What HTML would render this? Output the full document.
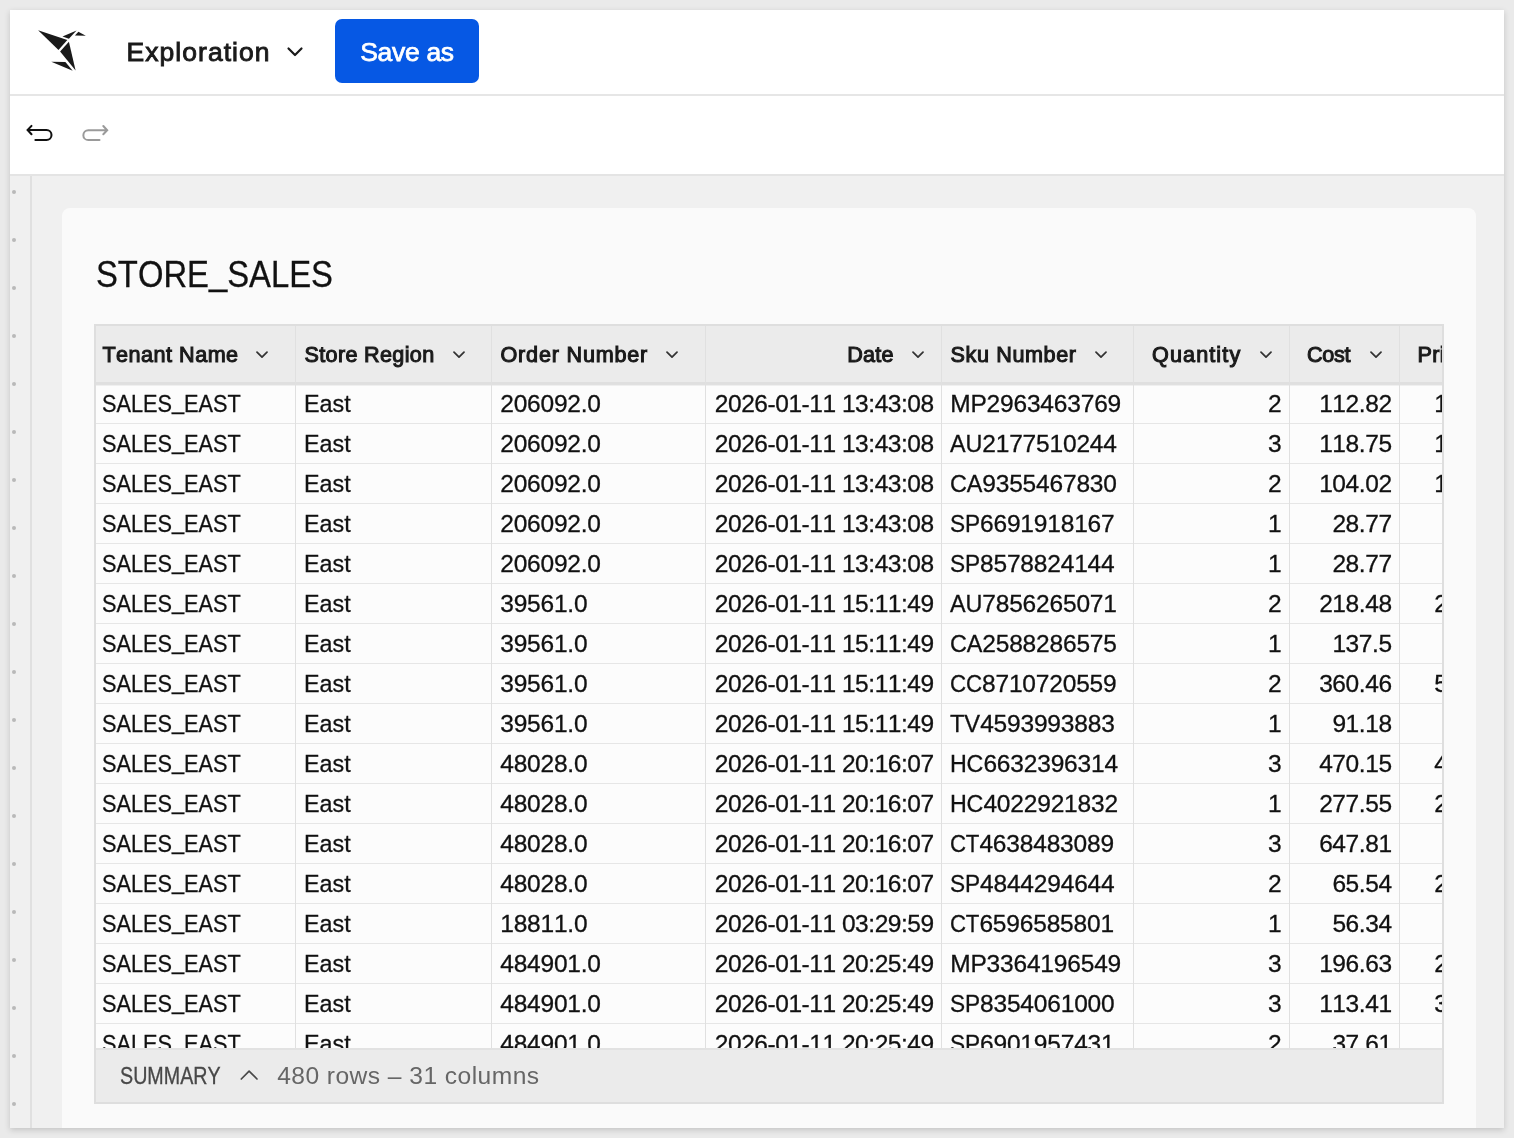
<!DOCTYPE html>
<html lang="en"><head><meta charset="utf-8"><title>Exploration</title>
<style>
html,body{margin:0;padding:0}
body{font-kerning:none;width:1514px;height:1138px;overflow:hidden;background:#eaeaea;font-family:"Liberation Sans",sans-serif;color:#111;position:relative}
.abs{position:absolute}
#panel{will-change:transform;position:absolute;left:10px;top:10px;width:1494px;height:1118px;background:#f0f0f0;box-shadow:0 2px 6px rgba(0,0,0,.17);overflow:hidden}
#hdr{position:absolute;left:0;top:0;width:1494px;height:84px;background:#fff;border-bottom:2px solid #e6e6e6}
#tb{position:absolute;left:0;top:86px;width:1494px;height:78px;background:#fff;border-bottom:2px solid #e4e4e4}
#title{position:absolute;left:116.5px;top:26px;font-weight:400;-webkit-text-stroke:.9px #1a1a1a;font-size:26.5px;line-height:32px;letter-spacing:1.05px;color:#1a1a1a;white-space:nowrap}
#save{position:absolute;left:325px;top:9px;width:144px;height:64px;border-radius:7px;background:#0658e4;color:#fff;font-weight:400;-webkit-text-stroke:.75px #fff;font-size:26.5px;line-height:66px;text-align:center;letter-spacing:-.3px;white-space:nowrap}
#ruler{position:absolute;left:0;top:166px;width:20px;height:952px;border-right:2px solid #e0e0e0}
.dot{position:absolute;left:2px;width:4px;height:4px;border-radius:50%;background:#b9b9b9}
#card{position:absolute;left:52px;top:198px;width:1414px;height:940px;background:#fafafa;border-radius:8px}
#h1{position:absolute;left:85.6px;top:245px;-webkit-text-stroke:.3px #111;font-size:36.2px;line-height:40px;white-space:nowrap;transform-origin:0 0;transform:scaleX(.906);color:#111}
#tbl{position:absolute;left:84px;top:314px;width:1346px;height:776px;border:2px solid #dedede;background:#fcfcfc;overflow:hidden}
#thead{position:absolute;left:0;top:0;width:1346px;height:56px;background:#ebebeb;border-bottom:2px solid #dfdfdf;box-shadow:0 1px 0 #e0e0e0,0 2px 0 #efefef;z-index:2}
.vs{position:absolute;top:0;width:1px;height:724px;background:#e0e0e0;z-index:3}
.hs{position:absolute;left:0;width:1346px;height:1px;background:#e6e6e6}
.c{position:absolute;font-size:23.2px;line-height:28px;white-space:nowrap;color:#111}
.c.r{text-align:right}
.c{font-size:24.5px;transform-origin:0 50%;-webkit-text-stroke:.3px #111}
.c.r{transform-origin:100% 50%}
.u{position:relative;top:-2.6px}
.p{display:inline-block;transform-origin:0 50%}
.c0{transform:scaleX(.886)}
.c1{transform:scaleX(.951)}
.c2{letter-spacing:-.22px}
.c3{letter-spacing:-.455px}
.c4{letter-spacing:-.18px}
.c5{letter-spacing:0}
.c6{letter-spacing:-.4px}
.c7{letter-spacing:-.4px}
.h{position:absolute;top:14.5px;font-weight:400;-webkit-text-stroke:1.05px #1a1a1a;font-size:21.6px;line-height:28px;white-space:nowrap;color:#1a1a1a;z-index:4}
.chev{position:absolute;top:25px;width:12px;height:8px;z-index:4}
#sum{position:absolute;left:0;top:722px;width:1346px;height:54px;background:#ebebeb;z-index:5;border-top:2px solid #e2e2e2;box-sizing:border-box}
#sum span{position:absolute;top:12px;line-height:28px;white-space:nowrap;color:#666}
</style></head><body>
<div id="panel">
<div id="hdr">
<svg class="abs" style="left:0;top:0" width="100" height="84" viewBox="10 10 100 84"><g fill="#1a1a1a">
<polygon points="38.1,30.3 67.3,40.1 58.5,50.1"/>
<polygon points="62.5,36.6 76.6,30.4 68.9,38.7"/>
<polygon points="74.9,35.5 78.4,31.8 85.8,35.7"/>
<polygon points="60.1,51.5 68.9,41.8 75.6,70.6"/>
<polygon points="51.3,61.7 65.4,62.0 72.7,70.8"/>
</g></svg>
<div id="title">Exploration</div>
<svg class="abs" style="left:276px;top:36px" width="18" height="12" viewBox="0 0 18 12"><path d="M2.5 2.5 L9 9 L15.5 2.5" fill="none" stroke="#1a1a1a" stroke-width="2.2" stroke-linecap="round" stroke-linejoin="round"/></svg>
<div id="save">Save as</div>
</div>
<div id="tb">
<svg class="abs" style="left:10px;top:14px" width="110" height="40" viewBox="20 110 110 40" fill="none" stroke-linecap="round" stroke-linejoin="miter">
<path d="M31.5 125.9 L27.6 130.05 L31.5 134.2 M27.8 130.05 H46.5 A5 5 0 0 1 46.5 140.05 H35.4" stroke="#111" stroke-width="2.05"/>
<path d="M103.3 126 L107.2 130.2 L103.3 134.3 M107 130.2 H88.3 A4.95 4.95 0 0 0 88.3 140.1 H99.5" stroke="#9a9a9a" stroke-width="2"/>
</svg>
</div>
<div id="ruler">
<div class="dot" style="top:14px"></div>
<div class="dot" style="top:62px"></div>
<div class="dot" style="top:110px"></div>
<div class="dot" style="top:158px"></div>
<div class="dot" style="top:206px"></div>
<div class="dot" style="top:254px"></div>
<div class="dot" style="top:302px"></div>
<div class="dot" style="top:350px"></div>
<div class="dot" style="top:398px"></div>
<div class="dot" style="top:446px"></div>
<div class="dot" style="top:494px"></div>
<div class="dot" style="top:542px"></div>
<div class="dot" style="top:590px"></div>
<div class="dot" style="top:638px"></div>
<div class="dot" style="top:686px"></div>
<div class="dot" style="top:734px"></div>
<div class="dot" style="top:782px"></div>
<div class="dot" style="top:830px"></div>
<div class="dot" style="top:878px"></div>
<div class="dot" style="top:926px"></div>
</div>
<div id="card"></div>
<div id="h1">STORE<span class="u" style="top:-2px">_</span>SALES</div>
<div id="tbl">
<div id="thead"></div>
<div class="vs" style="left:199px"></div>
<div class="vs" style="left:395px"></div>
<div class="vs" style="left:609px"></div>
<div class="vs" style="left:845px"></div>
<div class="vs" style="left:1037px"></div>
<div class="vs" style="left:1193px"></div>
<div class="vs" style="left:1303px"></div>
<div class="h" style="left:6.4px;letter-spacing:0.49px">Tenant Name</div>
<svg class="chev" style="left:160.4px" viewBox="0 0 12 8"><path d="M1 1.2 L6 6.2 L11 1.2" fill="none" stroke="#333" stroke-width="1.7" stroke-linecap="round" stroke-linejoin="round"/></svg>
<div class="h" style="left:208.5px;letter-spacing:0.33px">Store Region</div>
<svg class="chev" style="left:356.8px" viewBox="0 0 12 8"><path d="M1 1.2 L6 6.2 L11 1.2" fill="none" stroke="#333" stroke-width="1.7" stroke-linecap="round" stroke-linejoin="round"/></svg>
<div class="h" style="left:404.5px;letter-spacing:0.8px">Order Number</div>
<svg class="chev" style="left:570.0px" viewBox="0 0 12 8"><path d="M1 1.2 L6 6.2 L11 1.2" fill="none" stroke="#333" stroke-width="1.7" stroke-linecap="round" stroke-linejoin="round"/></svg>
<div class="h" style="left:751.3px;letter-spacing:0.17px">Date</div>
<svg class="chev" style="left:816.0px" viewBox="0 0 12 8"><path d="M1 1.2 L6 6.2 L11 1.2" fill="none" stroke="#333" stroke-width="1.7" stroke-linecap="round" stroke-linejoin="round"/></svg>
<div class="h" style="left:854.6px;letter-spacing:0.6px">Sku Number</div>
<svg class="chev" style="left:999.1px" viewBox="0 0 12 8"><path d="M1 1.2 L6 6.2 L11 1.2" fill="none" stroke="#333" stroke-width="1.7" stroke-linecap="round" stroke-linejoin="round"/></svg>
<div class="h" style="left:1056.0px;letter-spacing:1.11px">Quantity</div>
<svg class="chev" style="left:1163.5px" viewBox="0 0 12 8"><path d="M1 1.2 L6 6.2 L11 1.2" fill="none" stroke="#333" stroke-width="1.7" stroke-linecap="round" stroke-linejoin="round"/></svg>
<div class="h" style="left:1211.0px;letter-spacing:-0.33px">Cost</div>
<svg class="chev" style="left:1274.0px" viewBox="0 0 12 8"><path d="M1 1.2 L6 6.2 L11 1.2" fill="none" stroke="#333" stroke-width="1.7" stroke-linecap="round" stroke-linejoin="round"/></svg>
<div class="h" style="left:1321.5px;letter-spacing:0.3px">Price</div>
<div class="hs" style="top:97px"></div>
<div class="c c0" style="left:6.0px;top:64px">SALES<span class="u">_</span>EAST</div>
<div class="c c1" style="left:208.4px;top:64px">East</div>
<div class="c c2" style="left:404.3px;top:64px">206092.0</div>
<div class="c r c3" style="left:610px;width:227.7px;top:64px">2026-01-11 13:43:08</div>
<div class="c c4" style="left:854.2px;top:64px">MP2963463769</div>
<div class="c r c5" style="left:1038px;width:147.7px;top:64px">2</div>
<div class="c r c6" style="left:1194px;width:101.7px;top:64px">112.82</div>
<div class="c r c7" style="left:1304px;width:106.7px;top:64px">159.99</div>
<div class="hs" style="top:137px"></div>
<div class="c c0" style="left:6.0px;top:104px">SALES<span class="u">_</span>EAST</div>
<div class="c c1" style="left:208.4px;top:104px">East</div>
<div class="c c2" style="left:404.3px;top:104px">206092.0</div>
<div class="c r c3" style="left:610px;width:227.7px;top:104px">2026-01-11 13:43:08</div>
<div class="c c4" style="left:854.2px;top:104px"><span class="p" style="transform:scaleX(0.953);margin-right:-1.6px">AU</span>2177510244</div>
<div class="c r c5" style="left:1038px;width:147.7px;top:104px">3</div>
<div class="c r c6" style="left:1194px;width:101.7px;top:104px">118.75</div>
<div class="c r c7" style="left:1304px;width:106.7px;top:104px">169.99</div>
<div class="hs" style="top:177px"></div>
<div class="c c0" style="left:6.0px;top:144px">SALES<span class="u">_</span>EAST</div>
<div class="c c1" style="left:208.4px;top:144px">East</div>
<div class="c c2" style="left:404.3px;top:144px">206092.0</div>
<div class="c r c3" style="left:610px;width:227.7px;top:144px">2026-01-11 13:43:08</div>
<div class="c c4" style="left:854.2px;top:144px"><span class="p" style="transform:scaleX(0.953);margin-right:-1.6px">CA</span>9355467830</div>
<div class="c r c5" style="left:1038px;width:147.7px;top:144px">2</div>
<div class="c r c6" style="left:1194px;width:101.7px;top:144px">104.02</div>
<div class="c r c7" style="left:1304px;width:106.7px;top:144px">149.99</div>
<div class="hs" style="top:217px"></div>
<div class="c c0" style="left:6.0px;top:184px">SALES<span class="u">_</span>EAST</div>
<div class="c c1" style="left:208.4px;top:184px">East</div>
<div class="c c2" style="left:404.3px;top:184px">206092.0</div>
<div class="c r c3" style="left:610px;width:227.7px;top:184px">2026-01-11 13:43:08</div>
<div class="c c4" style="left:854.2px;top:184px"><span class="p" style="transform:scaleX(0.924);margin-right:-2.5px">SP</span>6691918167</div>
<div class="c r c5" style="left:1038px;width:147.7px;top:184px">1</div>
<div class="c r c6" style="left:1194px;width:101.7px;top:184px">28.77</div>
<div class="c r c7" style="left:1304px;width:106.7px;top:184px">39.99</div>
<div class="hs" style="top:257px"></div>
<div class="c c0" style="left:6.0px;top:224px">SALES<span class="u">_</span>EAST</div>
<div class="c c1" style="left:208.4px;top:224px">East</div>
<div class="c c2" style="left:404.3px;top:224px">206092.0</div>
<div class="c r c3" style="left:610px;width:227.7px;top:224px">2026-01-11 13:43:08</div>
<div class="c c4" style="left:854.2px;top:224px"><span class="p" style="transform:scaleX(0.924);margin-right:-2.5px">SP</span>8578824144</div>
<div class="c r c5" style="left:1038px;width:147.7px;top:224px">1</div>
<div class="c r c6" style="left:1194px;width:101.7px;top:224px">28.77</div>
<div class="c r c7" style="left:1304px;width:106.7px;top:224px">39.99</div>
<div class="hs" style="top:297px"></div>
<div class="c c0" style="left:6.0px;top:264px">SALES<span class="u">_</span>EAST</div>
<div class="c c1" style="left:208.4px;top:264px">East</div>
<div class="c c2" style="left:404.3px;top:264px">39561.0</div>
<div class="c r c3" style="left:610px;width:227.7px;top:264px">2026-01-11 15:11:49</div>
<div class="c c4" style="left:854.2px;top:264px"><span class="p" style="transform:scaleX(0.953);margin-right:-1.6px">AU</span>7856265071</div>
<div class="c r c5" style="left:1038px;width:147.7px;top:264px">2</div>
<div class="c r c6" style="left:1194px;width:101.7px;top:264px">218.48</div>
<div class="c r c7" style="left:1304px;width:106.7px;top:264px">299.99</div>
<div class="hs" style="top:337px"></div>
<div class="c c0" style="left:6.0px;top:304px">SALES<span class="u">_</span>EAST</div>
<div class="c c1" style="left:208.4px;top:304px">East</div>
<div class="c c2" style="left:404.3px;top:304px">39561.0</div>
<div class="c r c3" style="left:610px;width:227.7px;top:304px">2026-01-11 15:11:49</div>
<div class="c c4" style="left:854.2px;top:304px"><span class="p" style="transform:scaleX(0.953);margin-right:-1.6px">CA</span>2588286575</div>
<div class="c r c5" style="left:1038px;width:147.7px;top:304px">1</div>
<div class="c r c6" style="left:1194px;width:101.7px;top:304px">137.5</div>
<div class="c r c7" style="left:1304px;width:106.7px;top:304px">199.9</div>
<div class="hs" style="top:377px"></div>
<div class="c c0" style="left:6.0px;top:344px">SALES<span class="u">_</span>EAST</div>
<div class="c c1" style="left:208.4px;top:344px">East</div>
<div class="c c2" style="left:404.3px;top:344px">39561.0</div>
<div class="c r c3" style="left:610px;width:227.7px;top:344px">2026-01-11 15:11:49</div>
<div class="c c4" style="left:854.2px;top:344px"><span class="p" style="transform:scaleX(0.910);margin-right:-3.2px">CC</span>8710720559</div>
<div class="c r c5" style="left:1038px;width:147.7px;top:344px">2</div>
<div class="c r c6" style="left:1194px;width:101.7px;top:344px">360.46</div>
<div class="c r c7" style="left:1304px;width:106.7px;top:344px">519.99</div>
<div class="hs" style="top:417px"></div>
<div class="c c0" style="left:6.0px;top:384px">SALES<span class="u">_</span>EAST</div>
<div class="c c1" style="left:208.4px;top:384px">East</div>
<div class="c c2" style="left:404.3px;top:384px">39561.0</div>
<div class="c r c3" style="left:610px;width:227.7px;top:384px">2026-01-11 15:11:49</div>
<div class="c c4" style="left:854.2px;top:384px"><span class="p" style="transform:scaleX(0.968);margin-right:-1.0px">TV</span>4593993883</div>
<div class="c r c5" style="left:1038px;width:147.7px;top:384px">1</div>
<div class="c r c6" style="left:1194px;width:101.7px;top:384px">91.18</div>
<div class="c r c7" style="left:1304px;width:106.7px;top:384px">129.9</div>
<div class="hs" style="top:457px"></div>
<div class="c c0" style="left:6.0px;top:424px">SALES<span class="u">_</span>EAST</div>
<div class="c c1" style="left:208.4px;top:424px">East</div>
<div class="c c2" style="left:404.3px;top:424px">48028.0</div>
<div class="c r c3" style="left:610px;width:227.7px;top:424px">2026-01-11 20:16:07</div>
<div class="c c4" style="left:854.2px;top:424px"><span class="p" style="transform:scaleX(0.949);margin-right:-1.8px">HC</span>6632396314</div>
<div class="c r c5" style="left:1038px;width:147.7px;top:424px">3</div>
<div class="c r c6" style="left:1194px;width:101.7px;top:424px">470.15</div>
<div class="c r c7" style="left:1304px;width:106.7px;top:424px">499.99</div>
<div class="hs" style="top:497px"></div>
<div class="c c0" style="left:6.0px;top:464px">SALES<span class="u">_</span>EAST</div>
<div class="c c1" style="left:208.4px;top:464px">East</div>
<div class="c c2" style="left:404.3px;top:464px">48028.0</div>
<div class="c r c3" style="left:610px;width:227.7px;top:464px">2026-01-11 20:16:07</div>
<div class="c c4" style="left:854.2px;top:464px"><span class="p" style="transform:scaleX(0.949);margin-right:-1.8px">HC</span>4022921832</div>
<div class="c r c5" style="left:1038px;width:147.7px;top:464px">1</div>
<div class="c r c6" style="left:1194px;width:101.7px;top:464px">277.55</div>
<div class="c r c7" style="left:1304px;width:106.7px;top:464px">299.99</div>
<div class="hs" style="top:537px"></div>
<div class="c c0" style="left:6.0px;top:504px">SALES<span class="u">_</span>EAST</div>
<div class="c c1" style="left:208.4px;top:504px">East</div>
<div class="c c2" style="left:404.3px;top:504px">48028.0</div>
<div class="c r c3" style="left:610px;width:227.7px;top:504px">2026-01-11 20:16:07</div>
<div class="c c4" style="left:854.2px;top:504px"><span class="p" style="transform:scaleX(0.905);margin-right:-3.1px">CT</span>4638483089</div>
<div class="c r c5" style="left:1038px;width:147.7px;top:504px">3</div>
<div class="c r c6" style="left:1194px;width:101.7px;top:504px">647.81</div>
<div class="c r c7" style="left:1304px;width:106.7px;top:504px">899.9</div>
<div class="hs" style="top:577px"></div>
<div class="c c0" style="left:6.0px;top:544px">SALES<span class="u">_</span>EAST</div>
<div class="c c1" style="left:208.4px;top:544px">East</div>
<div class="c c2" style="left:404.3px;top:544px">48028.0</div>
<div class="c r c3" style="left:610px;width:227.7px;top:544px">2026-01-11 20:16:07</div>
<div class="c c4" style="left:854.2px;top:544px"><span class="p" style="transform:scaleX(0.924);margin-right:-2.5px">SP</span>4844294644</div>
<div class="c r c5" style="left:1038px;width:147.7px;top:544px">2</div>
<div class="c r c6" style="left:1194px;width:101.7px;top:544px">65.54</div>
<div class="c r c7" style="left:1304px;width:106.7px;top:544px">249.99</div>
<div class="hs" style="top:617px"></div>
<div class="c c0" style="left:6.0px;top:584px">SALES<span class="u">_</span>EAST</div>
<div class="c c1" style="left:208.4px;top:584px">East</div>
<div class="c c2" style="left:404.3px;top:584px">18811.0</div>
<div class="c r c3" style="left:610px;width:227.7px;top:584px">2026-01-11 03:29:59</div>
<div class="c c4" style="left:854.2px;top:584px"><span class="p" style="transform:scaleX(0.905);margin-right:-3.1px">CT</span>6596585801</div>
<div class="c r c5" style="left:1038px;width:147.7px;top:584px">1</div>
<div class="c r c6" style="left:1194px;width:101.7px;top:584px">56.34</div>
<div class="c r c7" style="left:1304px;width:106.7px;top:584px">79.99</div>
<div class="hs" style="top:657px"></div>
<div class="c c0" style="left:6.0px;top:624px">SALES<span class="u">_</span>EAST</div>
<div class="c c1" style="left:208.4px;top:624px">East</div>
<div class="c c2" style="left:404.3px;top:624px">484901.0</div>
<div class="c r c3" style="left:610px;width:227.7px;top:624px">2026-01-11 20:25:49</div>
<div class="c c4" style="left:854.2px;top:624px">MP3364196549</div>
<div class="c r c5" style="left:1038px;width:147.7px;top:624px">3</div>
<div class="c r c6" style="left:1194px;width:101.7px;top:624px">196.63</div>
<div class="c r c7" style="left:1304px;width:106.7px;top:624px">279.99</div>
<div class="hs" style="top:697px"></div>
<div class="c c0" style="left:6.0px;top:664px">SALES<span class="u">_</span>EAST</div>
<div class="c c1" style="left:208.4px;top:664px">East</div>
<div class="c c2" style="left:404.3px;top:664px">484901.0</div>
<div class="c r c3" style="left:610px;width:227.7px;top:664px">2026-01-11 20:25:49</div>
<div class="c c4" style="left:854.2px;top:664px"><span class="p" style="transform:scaleX(0.924);margin-right:-2.5px">SP</span>8354061000</div>
<div class="c r c5" style="left:1038px;width:147.7px;top:664px">3</div>
<div class="c r c6" style="left:1194px;width:101.7px;top:664px">113.41</div>
<div class="c r c7" style="left:1304px;width:106.7px;top:664px">349.99</div>
<div class="hs" style="top:737px"></div>
<div class="c c0" style="left:6.0px;top:704px">SALES<span class="u">_</span>EAST</div>
<div class="c c1" style="left:208.4px;top:704px">East</div>
<div class="c c2" style="left:404.3px;top:704px">484901.0</div>
<div class="c r c3" style="left:610px;width:227.7px;top:704px">2026-01-11 20:25:49</div>
<div class="c c4" style="left:854.2px;top:704px"><span class="p" style="transform:scaleX(0.924);margin-right:-2.5px">SP</span>6901957431</div>
<div class="c r c5" style="left:1038px;width:147.7px;top:704px">2</div>
<div class="c r c6" style="left:1194px;width:101.7px;top:704px">37.61</div>
<div class="c r c7" style="left:1304px;width:106.7px;top:704px">49.99</div>
<div id="sum"><span style="left:24.4px;top:11.8px;font-size:23.5px;color:#484848;-webkit-text-stroke:.3px #484848;transform-origin:0 50%;transform:scaleX(.838)">SUMMARY</span><svg class="abs" style="left:142px;top:14px" width="24" height="20" viewBox="238 1064 24 20"><path d="M241.3 1079 L249.1 1071.2 L257 1079" fill="none" stroke="#484848" stroke-width="1.7" stroke-linecap="round" stroke-linejoin="round"/></svg><span style="left:181.2px;top:11.6px;font-size:24.6px;letter-spacing:.45px">480 rows – 31 columns</span></div>
</div>
</div></body></html>
